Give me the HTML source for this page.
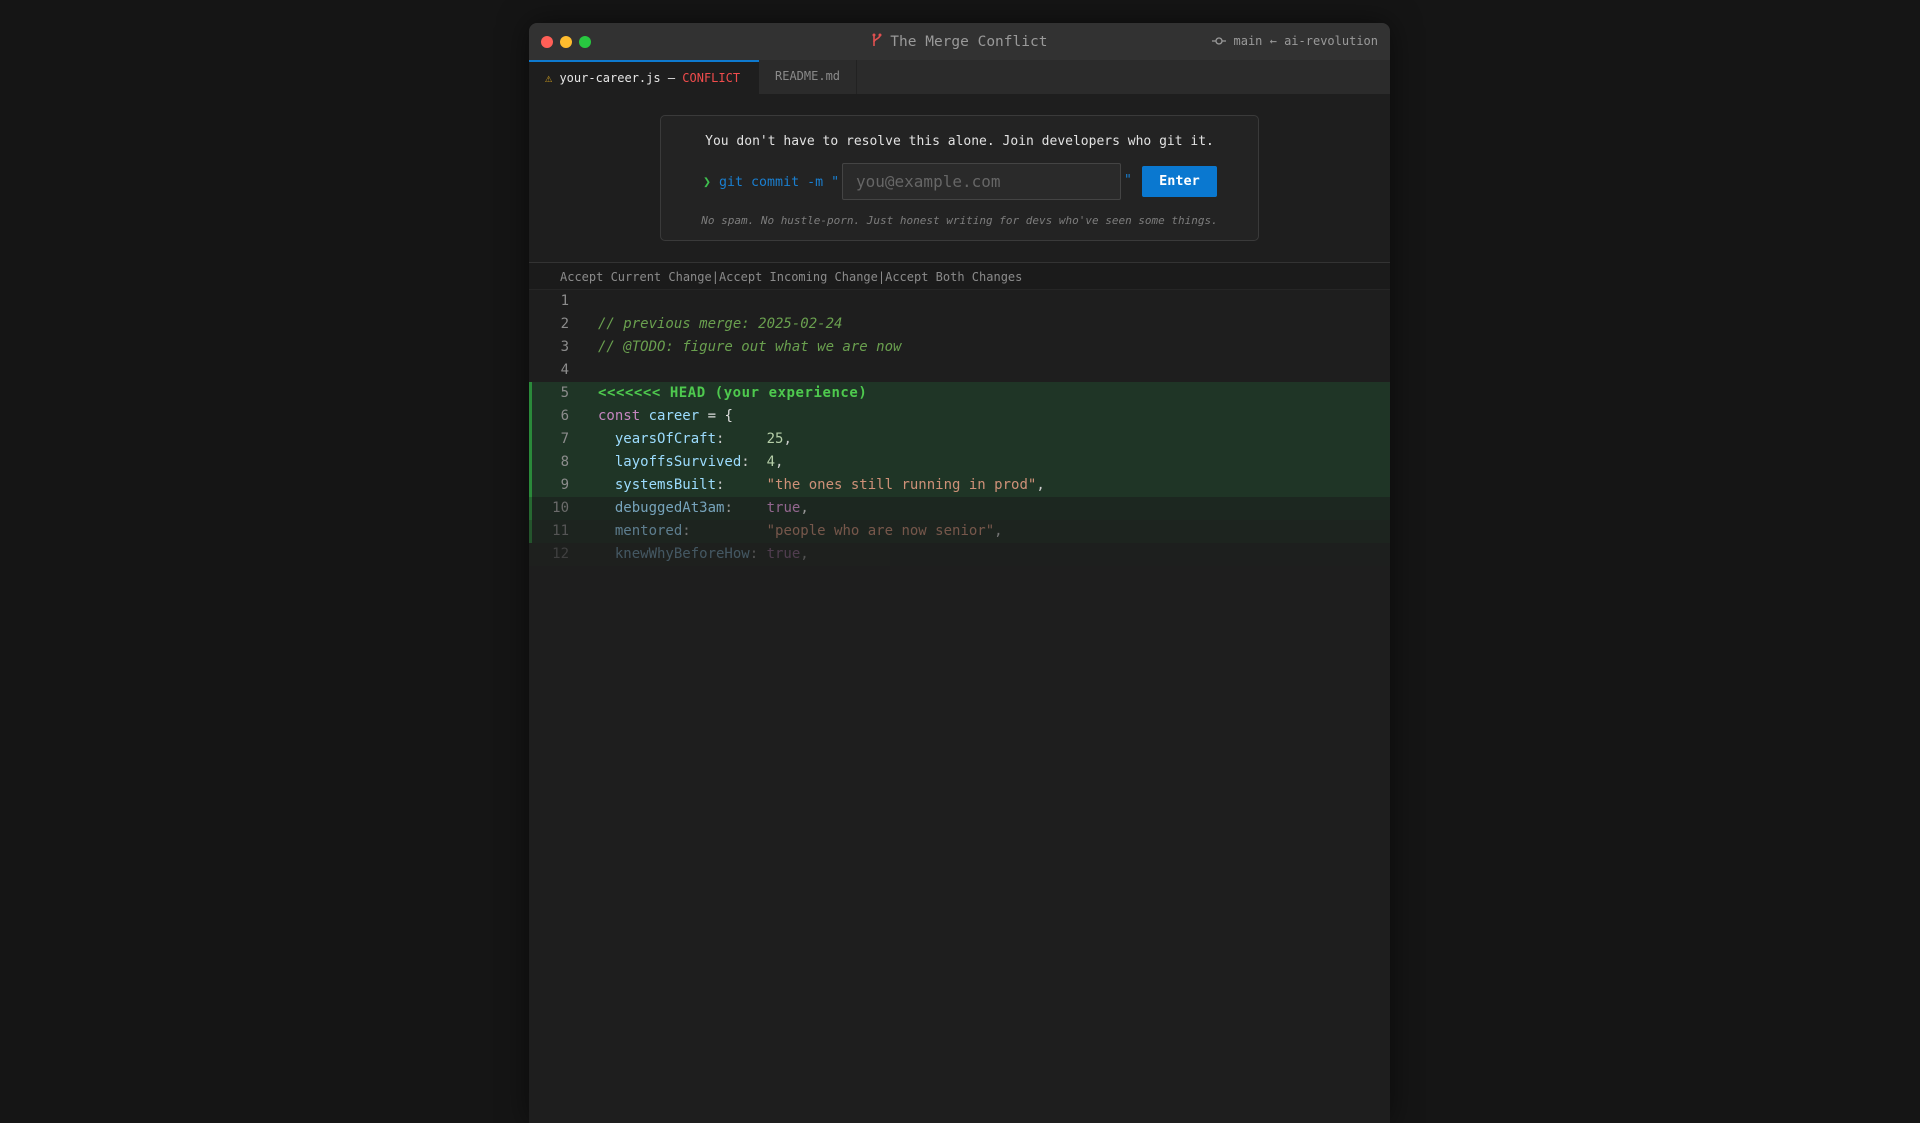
<!DOCTYPE html>
<html><head><meta charset="utf-8"><style>
*{margin:0;padding:0;box-sizing:border-box}
body{width:1920px;height:1080px;background:#151515;font-family:"DejaVu Sans Mono","Liberation Mono",monospace;overflow:hidden;position:relative}
.win{position:absolute;left:529px;top:23px;width:861px;height:1100px;background:#1e1e1e;border-radius:8px 8px 0 0;box-shadow:0 0 30px rgba(0,0,0,.5);overflow:hidden}
.title{height:37px;background:#323232;position:relative;color:#9a9a9a}
.dot{position:absolute;top:13px;width:12px;height:12px;border-radius:50%}
.ttl{position:absolute;left:0;right:0;top:10px;text-align:center;font-size:14.5px}
.br{position:absolute;right:12px;top:11px;font-size:12px}
.tabs{height:34px;background:#2b2b2b;position:relative}
.tab1{position:absolute;left:0;top:0;width:230px;height:34px;background:#1e1e1e;border-top:2px solid #0e7acf;font-size:12px;color:#e6e6e6;padding:9px 0 0 16px}
.tab2{position:absolute;left:230px;top:0;width:98px;height:34px;border-right:1px solid #222;font-size:12px;color:#8a8a8a;padding:9px 0 0 16px}
.card{position:absolute;left:131px;top:92px;width:599px;height:126px;border:1px solid #3a3a3a;border-radius:5px;background:#232323}
.hd{position:absolute;top:18px;left:0;right:0;text-align:center;color:#e2e2e2;font-size:13px}
.pr{position:absolute;left:42px;top:59px;font-size:13.3px;color:#1a7fd0}
.inp{position:absolute;left:181px;top:47px;width:279px;height:37px;border:1px solid #444;background:#2a2a2a;border-radius:2px;color:#666;font-size:16px;padding:8px 0 0 13px}
.q2{position:absolute;left:463px;top:57px;color:#1a7fd0;font-size:13px}
.btn{position:absolute;left:481px;top:50px;width:75px;height:31px;background:#0a78d0;border-radius:2px;color:#fff;font-weight:bold;font-size:13.5px;text-align:center;line-height:31px}
.ft{position:absolute;left:0;right:0;top:98px;text-align:center;font-style:italic;color:#7d7d7d;font-size:11px}
.div{position:absolute;left:0;right:0;top:239px;border-top:1px solid #333}
.acc{position:absolute;left:0;right:0;top:240px;height:27px;background:#1b1b1b;color:#8b8b8b;font-size:12px;padding:7px 0 0 31px;border-bottom:1px solid #262626}
.code{position:absolute;left:0;right:0;top:267px;font-size:14px}
.row{height:23px;line-height:23px;position:relative;white-space:pre}
.n{position:absolute;left:0;width:40px;text-align:right;color:#8c8c8c;top:0}
.t{position:absolute;left:69px;top:0}
.g{background:#1f3526;border-left:3px solid #2a8a3a}
.g .n{left:-3px}.g .t{left:66px}
.c{color:#6aa04f;font-style:italic}
.k{color:#c586c0}.v{color:#9cdcfe}.s{color:#ce9178}.num{color:#b5cea8}
</style></head><body>
<div class="win">
 <div class="title">
  <div class="dot" style="left:12px;background:#ff5f57"></div>
  <div class="dot" style="left:31px;background:#febc2e"></div>
  <div class="dot" style="left:50px;background:#28c840"></div>
  <div class="ttl"><svg width="10" height="14" viewBox="0 0 10 14" style="vertical-align:-1px"><g stroke="#e05050" stroke-width="1.6" fill="none"><path d="M2 1v12"/><path d="M8 2c0 4-6 4-6 7"/></g><circle cx="2" cy="2" r="1.5" fill="#e05050"/><circle cx="8" cy="2" r="1.5" fill="#e05050"/></svg> The Merge Conflict</div>
  <div class="br"><svg width="14" height="10" viewBox="0 0 14 10" style="vertical-align:-1px"><path d="M0 5h4M10 5h4" stroke="#9a9a9a" stroke-width="1.3"/><circle cx="7" cy="5" r="3" stroke="#9a9a9a" stroke-width="1.3" fill="none"/></svg> main ← ai-revolution</div>
 </div>
 <div class="tabs">
  <div class="tab1"><span style="color:#d2a020">⚠</span> your-career.js — <span style="color:#f14c4c">CONFLICT</span></div>
  <div class="tab2">README.md</div>
 </div>
 <div class="card">
  <div class="hd">You don't have to resolve this alone. Join developers who git it.</div>
  <div class="pr"><span style="color:#3fbf4f">❯</span> git commit -m "</div>
  <div class="inp">you@example.com</div>
  <div class="q2">"</div>
  <div class="btn">Enter</div>
  <div class="ft">No spam. No hustle-porn. Just honest writing for devs who've seen some things.</div>
 </div>
 <div class="div"></div>
 <div class="acc">Accept Current Change|Accept Incoming Change|Accept Both Changes</div>
 <div class="code">
  <div class="row"><span class="n">1</span></div>
  <div class="row"><span class="n">2</span><span class="t c">// previous merge: 2025-02-24</span></div>
  <div class="row"><span class="n">3</span><span class="t c">// @TODO: figure out what we are now</span></div>
  <div class="row"><span class="n">4</span></div>
  <div class="row g"><span class="n">5</span><span class="t" style="color:#4ec94e;font-weight:bold;letter-spacing:.55px">&lt;&lt;&lt;&lt;&lt;&lt;&lt; HEAD (your experience)</span></div>
  <div class="row g"><span class="n">6</span><span class="t"><span class="k">const</span> <span class="v">career</span> <span style="color:#ddd">= {</span></span></div>
  <div class="row g"><span class="n">7</span><span class="t">  <span class="v">yearsOfCraft</span><span style="color:#ccc">:     </span><span class="num">25</span><span style="color:#ccc">,</span></span></div>
  <div class="row g"><span class="n">8</span><span class="t">  <span class="v">layoffsSurvived</span><span style="color:#ccc">:  </span><span class="num">4</span><span style="color:#ccc">,</span></span></div>
  <div class="row g"><span class="n">9</span><span class="t">  <span class="v">systemsBuilt</span><span style="color:#ccc">:     </span><span class="s">"the ones still running in prod"</span><span style="color:#ccc">,</span></span></div>
  <div class="row g" style="opacity:.7;background:#1c2c21"><span class="n">10</span><span class="t">  <span class="v">debuggedAt3am</span><span style="color:#ccc">:    </span><span class="k">true</span><span style="color:#ccc">,</span></span></div>
  <div class="row g" style="opacity:.5;background:#1d2a21"><span class="n">11</span><span class="t">  <span class="v">mentored</span><span style="color:#ccc">:         </span><span class="s">"people who are now senior"</span><span style="color:#ccc">,</span></span></div>
  <div class="row" style="opacity:.3;background:#1f2621"><span class="n">12</span><span class="t">  <span class="v">knewWhyBeforeHow</span><span style="color:#ccc">: </span><span class="k">true</span><span style="color:#ccc">,</span></span></div>
 </div>
</div>
</body></html>
